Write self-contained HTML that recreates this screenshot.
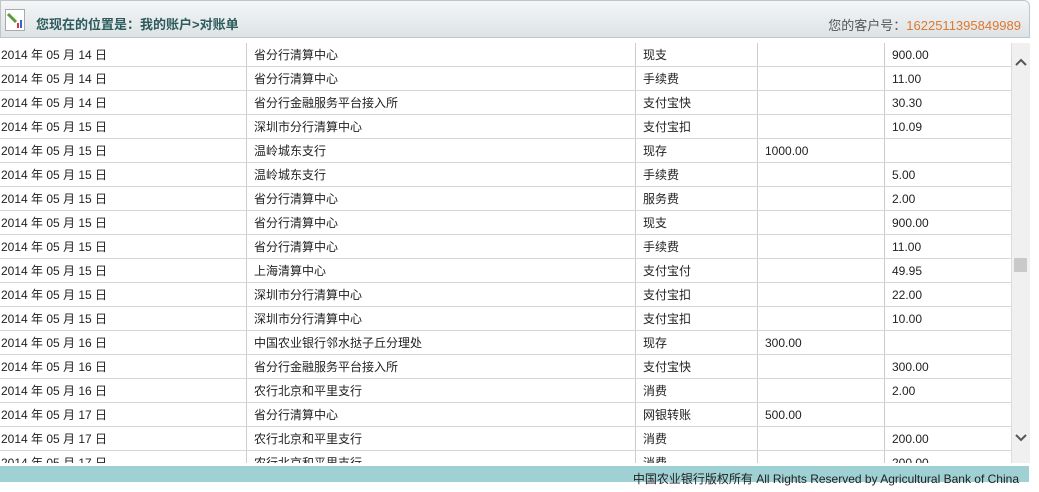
<!DOCTYPE html>
<html><head><meta charset="utf-8"><style>
body{margin:0;width:1039px;height:482px;overflow:hidden;background:#fff;font-family:"Liberation Sans","Noto Sans CJK SC",sans-serif;font-size:12px;color:#222;position:relative}
.hd{position:absolute;left:0;top:0;width:1028px;height:36px;background:linear-gradient(#f4f6f7,#dde3e6);border:1px solid #bfc6ca;border-radius:0 6px 0 0}
.hd .t{position:absolute;left:35px;top:13px;font-size:13px;font-weight:bold;color:#2d5a5a}
.hd .r{position:absolute;right:8px;top:14px;font-size:13px;color:#555}
.hd .r span{color:#e0782e}
.ic{position:absolute;left:4px;top:8px;width:18px;height:20px;border:1px solid #aaa;background:#fff}
.tb{position:absolute;left:0;top:43px;width:1011px;height:420px;overflow:hidden}
.row{height:23px;border-bottom:1px solid #d8d8d8;position:relative}
.row div{position:absolute;top:0;height:23px;line-height:24px;border-left:1px solid #ccc;padding-left:7px}
.row .a{left:0;border:none;padding-left:1px}
.row .b{left:246px}.row .c{left:635px}.row .d{left:757px}.row .e{left:884px;right:0}
.sb{position:absolute;left:1011px;top:43px;width:18px;height:420px;background:#f0f0f0;border-left:1px solid #ddd}
.th{position:absolute;left:1014px;top:258px;width:13px;height:14px;background:#c9c9c9}
.ft{position:absolute;left:0;top:466px;width:1029px;height:16px;background:#9fd0d3;font-size:12px;color:#222;text-align:right;line-height:26px}
.ft span{margin-right:10px}
</style></head><body>
<div class="hd"><div class="ic"><svg width="18" height="20"><path d="M2 4 L10 12" stroke="#5a9a3a" stroke-width="3"/><rect x="11" y="13" width="2" height="5" fill="#d33"/><rect x="14" y="10" width="2" height="8" fill="#36c"/></svg></div><div class="t">您现在的位置是：我的账户&gt;对账单</div><div class="r">您的客户号：<span>1622511395849989</span></div></div>
<div class="tb">
<div class="row"><div class="a">2014 年 05 月 14 日</div><div class="b">省分行清算中心</div><div class="c">现支</div><div class="d"></div><div class="e">900.00</div></div>
<div class="row"><div class="a">2014 年 05 月 14 日</div><div class="b">省分行清算中心</div><div class="c">手续费</div><div class="d"></div><div class="e">11.00</div></div>
<div class="row"><div class="a">2014 年 05 月 14 日</div><div class="b">省分行金融服务平台接入所</div><div class="c">支付宝快</div><div class="d"></div><div class="e">30.30</div></div>
<div class="row"><div class="a">2014 年 05 月 15 日</div><div class="b">深圳市分行清算中心</div><div class="c">支付宝扣</div><div class="d"></div><div class="e">10.09</div></div>
<div class="row"><div class="a">2014 年 05 月 15 日</div><div class="b">温岭城东支行</div><div class="c">现存</div><div class="d">1000.00</div><div class="e"></div></div>
<div class="row"><div class="a">2014 年 05 月 15 日</div><div class="b">温岭城东支行</div><div class="c">手续费</div><div class="d"></div><div class="e">5.00</div></div>
<div class="row"><div class="a">2014 年 05 月 15 日</div><div class="b">省分行清算中心</div><div class="c">服务费</div><div class="d"></div><div class="e">2.00</div></div>
<div class="row"><div class="a">2014 年 05 月 15 日</div><div class="b">省分行清算中心</div><div class="c">现支</div><div class="d"></div><div class="e">900.00</div></div>
<div class="row"><div class="a">2014 年 05 月 15 日</div><div class="b">省分行清算中心</div><div class="c">手续费</div><div class="d"></div><div class="e">11.00</div></div>
<div class="row"><div class="a">2014 年 05 月 15 日</div><div class="b">上海清算中心</div><div class="c">支付宝付</div><div class="d"></div><div class="e">49.95</div></div>
<div class="row"><div class="a">2014 年 05 月 15 日</div><div class="b">深圳市分行清算中心</div><div class="c">支付宝扣</div><div class="d"></div><div class="e">22.00</div></div>
<div class="row"><div class="a">2014 年 05 月 15 日</div><div class="b">深圳市分行清算中心</div><div class="c">支付宝扣</div><div class="d"></div><div class="e">10.00</div></div>
<div class="row"><div class="a">2014 年 05 月 16 日</div><div class="b">中国农业银行邻水挞子丘分理处</div><div class="c">现存</div><div class="d">300.00</div><div class="e"></div></div>
<div class="row"><div class="a">2014 年 05 月 16 日</div><div class="b">省分行金融服务平台接入所</div><div class="c">支付宝快</div><div class="d"></div><div class="e">300.00</div></div>
<div class="row"><div class="a">2014 年 05 月 16 日</div><div class="b">农行北京和平里支行</div><div class="c">消费</div><div class="d"></div><div class="e">2.00</div></div>
<div class="row"><div class="a">2014 年 05 月 17 日</div><div class="b">省分行清算中心</div><div class="c">网银转账</div><div class="d">500.00</div><div class="e"></div></div>
<div class="row"><div class="a">2014 年 05 月 17 日</div><div class="b">农行北京和平里支行</div><div class="c">消费</div><div class="d"></div><div class="e">200.00</div></div>
<div class="row"><div class="a">2014 年 05 月 17 日</div><div class="b">农行北京和平里支行</div><div class="c">消费</div><div class="d"></div><div class="e">200.00</div></div>
</div>
<div class="sb"><svg style="position:absolute;left:3px;top:15px" width="12" height="8"><path d="M1 7 L6 2 L11 7" stroke="#555" stroke-width="2" fill="none"/></svg><div class="th" style="left:2px;top:215px"></div><svg style="position:absolute;left:3px;top:391px" width="12" height="8"><path d="M1 1 L6 6 L11 1" stroke="#555" stroke-width="2" fill="none"/></svg></div>
<div class="ft"><span>中国农业银行版权所有 All Rights Reserved by Agricultural Bank of China</span></div>
</body></html>
